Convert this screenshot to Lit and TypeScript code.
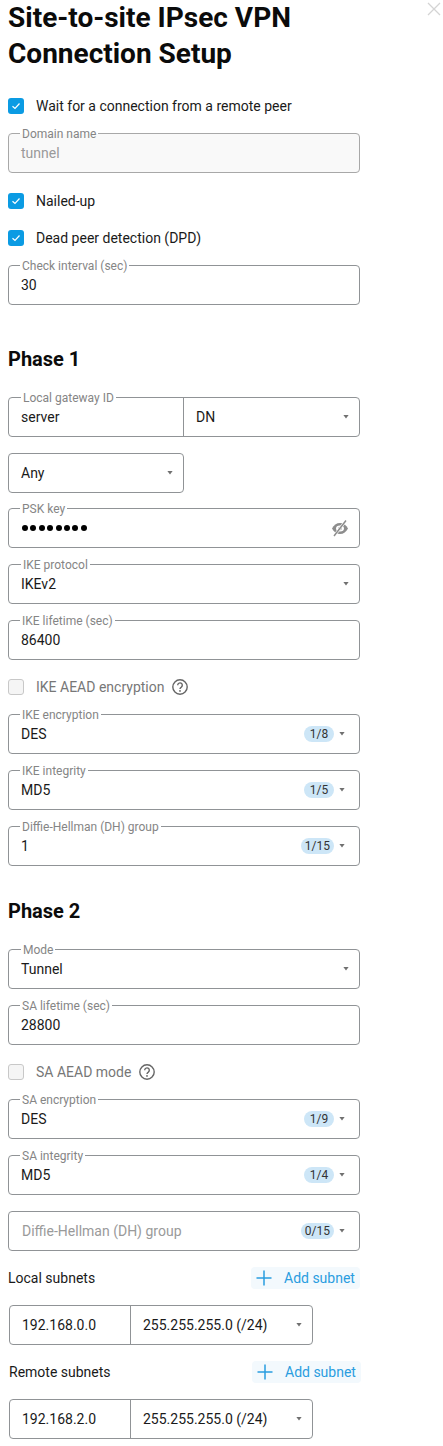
import { LitElement, html, css, nothing } from "lit";
import { customElement } from "lit/decorators.js";

const caret = html`<span class="caret"></span>`;

@customElement("app-root")
export class AppRoot extends LitElement {
  static styles = css`
    :host { display: block; width: 443px; height: 1446px; background: #fff; font-family: Roboto, "Liberation Sans", sans-serif; color: #1a1a1a; font-size: 14px; overflow: hidden; position: relative; }
    .form { width: 352px; margin-left: 8px; display: flex; flex-direction: column; }
    h1 { margin: 0; font-size: 28px; line-height: 36px; font-weight: 700; color: #0b0b0b; }
    h2 { margin: 0; font-size: 20px; line-height: 28px; font-weight: 700; color: #0b0b0b; }
    .close { position: absolute; left: 427px; top: 2px; width: 14px; height: 14px; }
    .check { display: flex; align-items: center; height: 16px; gap: 12px; line-height: 16px; }
    .box { width: 16px; height: 16px; box-sizing: border-box; border-radius: 3px; background: #0b9be3; display: flex; align-items: center; justify-content: center; flex: none; }
    .box.off { background: #f5f5f5; border: 1px solid #c8c8c8; }
    .check.off { color: #777; }
    .help { margin-left: -5px; width: 18px; height: 18px; flex: none; }
    .field { position: relative; height: 40px; box-sizing: border-box; border: 1px solid #909396; border-radius: 4px; display: flex; align-items: center; padding: 0 12px; flex: none; }
    .field.disabled { background: #f9f9f9; color: #9a9a9a; border-color: #a8a8a8; }
    .legend { position: absolute; left: 11px; top: -7px; padding: 0 2px; font-size: 12px; line-height: 14px; color: #858585; white-space: nowrap; background: linear-gradient(#fff 0 7px, transparent 7px); }
    .legend.wide { left: 12px; }
    .val { flex: 1; }
    .caret { width: 6px; height: 4px; background: #707070; clip-path: polygon(0 0, 100% 0, 50% 100%); margin-right: -2px; margin-top: -1px; flex: none; }
    .badge { height: 16px; line-height: 16px; min-width: 30px; padding: 0 4px; box-sizing: border-box; text-align: center; border-radius: 8px; background: #cde6f7; margin-right: 5px; font-size: 12px; color: #333; }
    .badge + .caret { margin-right: 2px; }
    .ph { color: #9a9a9a; flex: 1; padding-left: 1px; }
    .split { padding: 0; }
    .split > .a, .split > .b { height: 100%; display: flex; align-items: center; box-sizing: border-box; }
    .a { width: 175px; padding: 0 12px; border-right: 1px solid #909396; flex: none; }
    .b { flex: 1; padding: 0 12px; justify-content: space-between; }
    .dots { flex: 1; display: flex; gap: 2.4px; padding-left: 1px; }
    .dots span { width: 6px; height: 6px; border-radius: 50%; background: #000; }
    .eye { margin-right: -1px; flex: none; }
    .subhead { display: flex; align-items: center; justify-content: space-between; height: 22px; }
    .add { height: 22px; display: flex; align-items: center; background: #f3f9fd; border-radius: 4px; color: #2a9de0; padding: 0 4px 0 5px; gap: 12px; width: 109px; box-sizing: border-box; }
    .add svg { flex: none; }
    .subnet { width: 304px; margin-left: 1px; }
    .subnet .a { width: 121px; }
    .shift { margin-left: 1px; width: 352px; }
  `;

  private lab(t: string, wide = false) {
    return html`<span class="legend ${wide ? "wide" : ""}">${t}</span>`;
  }

  private check(label: string, on: boolean, mt: number, help = false) {
    return html`<div class="check ${on ? "" : "off"}" style="margin-top:${mt}px">
      <span class="box ${on ? "" : "off"}">${on ? html`<svg width="10" height="8" viewBox="0 0 10 8"><path d="M1.5 4.2 4 6.5 8.5 1.5" fill="none" stroke="#fff" stroke-width="1.2"/></svg>` : nothing}</span>
      <span>${label}</span>
      ${help ? html`<svg class="help" viewBox="0 0 18 18"><circle cx="9" cy="9" r="7.2" fill="none" stroke="#666" stroke-width="1.4"/><path d="M6.7 7.2a2.3 2.3 0 1 1 3.6 1.9c-.8.5-1.3 1-1.3 2" fill="none" stroke="#666" stroke-width="1.4"/><circle cx="9" cy="12.9" r=".9" fill="#666"/></svg>` : nothing}
    </div>`;
  }

  private input(label: string, v: string, mt: number, disabled = false) {
    return html`<div class="field ${disabled ? "disabled" : ""}" style="margin-top:${mt}px">${this.lab(label)}<span class="val">${v}</span></div>`;
  }

  private select(label: string, v: string, mt: number) {
    return html`<div class="field" style="margin-top:${mt}px">${this.lab(label, true)}<span class="val">${v}</span>${caret}</div>`;
  }

  private multi(label: string, v: string, n: string, mt: number) {
    return html`<div class="field" style="margin-top:${mt}px">${this.lab(label)}<span class="val">${v}</span><span class="badge">${n}</span>${caret}</div>`;
  }

  private subnetHead(label: string, mt: number, extra = false) {
    return html`<div class="subhead ${extra ? "shift" : ""}" style="margin-top:${mt}px">
      <span>${label}</span>
      <span class="add"><svg width="16" height="16" viewBox="0 0 16 16"><path d="M8 .5v15M.5 8h15" stroke="#2a9de0" stroke-width="1.5" fill="none"/></svg><span>Add subnet</span></span>
    </div>`;
  }

  private subnet(ip: string, mt: number) {
    return html`<div class="field split subnet" style="margin-top:${mt}px"><div class="a">${ip}</div><div class="b"><span>255.255.255.0 (/24)</span>${caret}</div></div>`;
  }

  render() {
    return html`
      <svg class="close" viewBox="0 0 14 14"><path d="M1 1l12 12M13 1L1 13" stroke="#d4d4d4" stroke-width="1.3" fill="none"/></svg>
      <div class="form">
        <h1>Site-to-site IPsec VPN Connection Setup</h1>
        ${this.check("Wait for a connection from a remote peer", true, 26)}
        ${this.input("Domain name", "tunnel", 19, true)}
        ${this.check("Nailed-up", true, 20)}
        ${this.check("Dead peer detection (DPD)", true, 21)}
        ${this.input("Check interval (sec)", "30", 19)}
        <h2 style="margin-top:40px">Phase 1</h2>
        <div class="field split" style="margin-top:24px">${this.lab("Local gateway ID", true)}<div class="a">server</div><div class="b"><span>DN</span>${caret}</div></div>
        <div class="field" style="margin-top:16px;width:176px"><span class="val">Any</span>${caret}</div>
        <div class="field" style="margin-top:15px">${this.lab("PSK key")}<span class="dots">${[1, 2, 3, 4, 5, 6, 7, 8].map(() => html`<span></span>`)}</span>
          <svg class="eye" width="16" height="18" viewBox="0 0 16 18"><path d="M0 9.5C1.7 6 4.5 4 8 4s6.3 2 8 5.5C14.3 13 11.5 15 8 15s-6.3-2-8-5.5z" fill="#8d8d8d"/><ellipse cx="8" cy="9.5" rx="4" ry="3" fill="#fff"/><circle cx="8" cy="9.5" r="1.8" fill="#8d8d8d"/><path d="M14 1.5 2 17" stroke="#fff" stroke-width="2.8"/><path d="M14 1.5 2 17" stroke="#8d8d8d" stroke-width="1.5"/></svg>
        </div>
        ${this.select("IKE protocol", "IKEv2", 16)}
        ${this.input("IKE lifetime (sec)", "86400", 16)}
        ${this.check("IKE AEAD encryption", false, 19, true)}
        ${this.multi("IKE encryption", "DES", "1/8", 19)}
        ${this.multi("IKE integrity", "MD5", "1/5", 16)}
        ${this.multi("Diffie-Hellman (DH) group", "1", "1/15", 16)}
        <h2 style="margin-top:31px">Phase 2</h2>
        ${this.select("Mode", "Tunnel", 24)}
        ${this.input("SA lifetime (sec)", "28800", 16)}
        ${this.check("SA AEAD mode", false, 19, true)}
        ${this.multi("SA encryption", "DES", "1/9", 19)}
        ${this.multi("SA integrity", "MD5", "1/4", 16)}
        <div class="field" style="margin-top:16px"><span class="ph">Diffie-Hellman (DH) group</span><span class="badge">0/15</span>${caret}</div>
        ${this.subnetHead("Local subnets", 16)}
        ${this.subnet("192.168.0.0", 16)}
        ${this.subnetHead("Remote subnets", 16, true)}
        ${this.subnet("192.168.2.0", 16)}
      </div>
    `;
  }
}
